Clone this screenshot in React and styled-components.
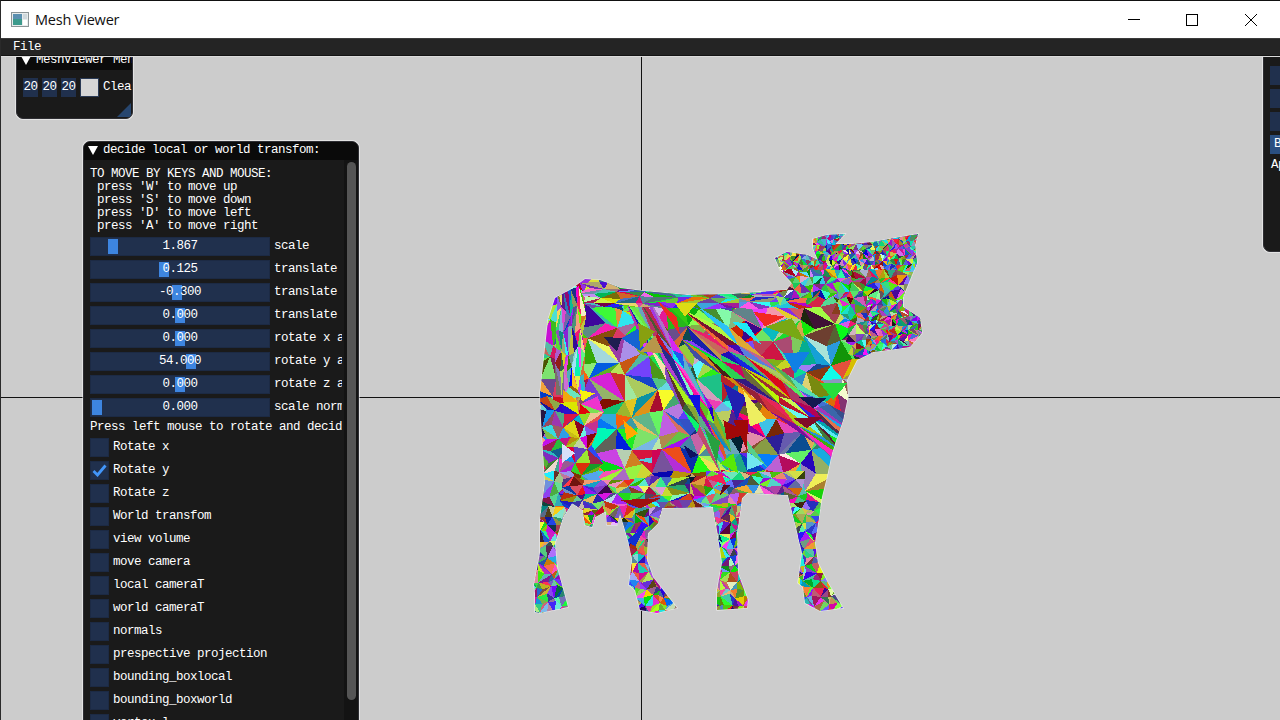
import React from "react";
import styled, { createGlobalStyle } from "styled-components";

const Global = createGlobalStyle`
  html, body { margin: 0; padding: 0; background: #ccc; overflow: hidden; }
`;

const Frame = styled.div`
  width: 1280px; height: 720px; display: flex; flex-direction: column;
  overflow: hidden; box-sizing: border-box;
  border-top: 1px solid #111; border-left: 1px solid #2a2a2a;
`;
const TitleBar = styled.header`
  height: 37px; flex: none; background: #fff; display: flex; align-items: center;
  padding-left: 10px; color: #111;
  font: 14.5px "Open Sans", "Noto Sans", sans-serif;
`;
const AppName = styled.span` margin-left: 6px; flex: 1; letter-spacing: -0.2px; `;
const WinControl = styled.button`
  width: 58.5px; height: 37px; border: 0; background: transparent; padding: 0;
  display: flex; align-items: center; justify-content: center;
`;
const MenuBar = styled.nav`
  height: 18px; flex: none; box-sizing: border-box; background: #242424;
  border-top: 1px solid #3b3b3b; border-bottom: 1px solid #141414;
  padding-left: 12px; display: flex; align-items: center;
  color: #fff; font: 12.5px/13px "Liberation Mono", "DejaVu Sans Mono", monospace; letter-spacing: -0.5px;
`;
const MenuItem = styled.span``;
const Viewport = styled.main`
  position: relative; flex: 1; background: #ccc; overflow: hidden;
  border-top: 1px solid #dcdcdc;
`;
const AxisV = styled.div`position: absolute; left: 640px; top: 0; bottom: 0; width: 1px; background: #111;`;
const AxisH = styled.div`position: absolute; left: 0; right: 0; top: 340px; height: 1px; background: #111;`;
const CowSvg = styled.svg`position: absolute; left: -1px; top: -57px;`;

const Win = styled.section`
  position: absolute; left: ${p => p.$x}px; top: ${p => p.$y}px;
  width: ${p => p.$w}px; height: ${p => p.$h}px;
  box-sizing: border-box; background: #1a1a1a; border: 1px solid #2e2e33;
  border-radius: 7px; box-shadow: 0 0 0 1px rgba(255,255,255,.45);
  overflow: hidden; display: flex; flex-direction: column; color: #fff;
  font: 12.5px/13px "Liberation Mono", "DejaVu Sans Mono", monospace; letter-spacing: -0.5px;
  white-space: nowrap;
`;
const WinTitle = styled.div`
  flex: none; height: 18px; box-sizing: border-box; padding: 0 0 2px 4px;
  background: #0a0a0a; display: flex; align-items: center;
  gap: 5px; overflow: hidden; white-space: nowrap;
`;
const Caret = styled.i`
  flex: none; width: 0; height: 0; border-left: 5px solid transparent; border-right: 5px solid transparent;
  border-top: 9px solid #fff;
`;
const ToolRow = styled.div`
  display: flex; gap: 4px; padding: 8px 0 0 6px; align-items: center;
`;
const NumBox = styled.span`
  width: 15px; height: 19px; flex: none; background: #20304d; text-align: center; line-height: 19px;
`;
const Swatch = styled.span`
  width: 19px; height: 19px; flex: none; box-sizing: border-box; background: #d6d6d6; border: 1px solid #2a3a55;
`;
const Grip = styled.i`
  position: absolute; right: 1px; bottom: 1px; width: 0; height: 0;
  border-left: 14px solid transparent; border-bottom: 14px solid #27466f;
`;
const WinBody = styled.div`flex: 1; display: flex; min-height: 0;`;
const Content = styled.div`
  flex: 1; min-width: 0; overflow: hidden; padding: 8px 2px 0 6px; margin-right: 2px;
  display: flex; flex-direction: column; gap: 4px;
`;
const HelpText = styled.pre`margin: 0; font: inherit; letter-spacing: inherit;`;
const Row = styled.div`display: flex; gap: 4px; height: 19px; flex: none; align-items: center;`;
const Slider = styled.div`
  position: relative; flex: none; width: 180px; height: 19px; box-sizing: border-box;
  background: #20304d; border: 1px solid #1c2a44; text-align: center; line-height: 17px;
`;
const SliderValue = styled.span`position: relative;`;
const SliderGrab = styled.i`
  position: absolute; top: 1px; bottom: 1px; width: 10px; background: #3d85e0;
  left: ${p => p.$at}px;
`;
const Note = styled.div`flex: none; height: 13px;`;
const Check = styled.span`
  width: 19px; height: 19px; flex: none; box-sizing: border-box;
  background: #20304d; border: 1px solid #1c2a44; display: flex; align-items: center; justify-content: center;
`;
const ScrollTrack = styled.div`
  flex: none; width: 14px; background: #131313; padding: 2px 2px 0 3px; box-sizing: border-box;
`;
const ScrollThumb = styled.div`width: 9px; height: 538px; background: #555; border-radius: 5px;`;
const SideRows = styled.div`display: flex; flex-direction: column; gap: 4px; padding: 2px 0 0 6px;`;
const SideLine = styled.div`height: 13px; margin-bottom: 1px; padding-left: 3px;`;
const SideBtn = styled.div`
  height: 19px; width: 60px; background: ${p => p.$active ? "#2a4f80" : "#20304d"};
  line-height: 19px; padding-left: 4px;
`;
const SideNote = styled.div`height: 13px; margin-top: 1px; padding-left: 1px;`;

/* ---------- cow mesh drawing ---------- */
const outline = [
[540,393],[548,320],[555,298],[570,290],[585,279],[600,280],[620,288],[643,291],[687,295],[733,294],[787,290],[792,283],[780,270],[775,258],[787,252],[807,255],[818,260],[813,248],[813,239],[827,235],[845,234],[835,244],[853,244],[873,242],[918,234],[915,245],[917,263],[910,280],[903,297],[903,307],[920,318],[922,333],[910,347],[873,352],[857,360],[847,380],[848,397],[843,420],[832,453],[827,477],[822,497],[815,543],[818,563],[828,583],[843,608],[820,611],[805,603],[803,587],[798,583],[802,553],[795,523],[788,495],[747,493],[742,498],[737,533],[738,573],[748,600],[747,608],[717,610],[717,590],[722,563],[717,530],[713,507],[662,508],[658,523],[648,533],[647,560],[653,577],[677,608],[657,613],[640,610],[635,590],[629,585],[632,560],[628,540],[620,513],[617,525],[607,525],[606,511],[595,517],[592,527],[585,525],[583,510],[572,503],[563,517],[555,543],[557,567],[568,607],[540,613],[535,612],[535,593],[534,585],[540,553],[540,520],[545,483],[541,420]
].map(p => p.join(",")).join(" ");

function rng(seed) {
  let a = seed;
  return () => {
    a |= 0; a = (a + 0x6d2b79f5) | 0;
    let t = Math.imul(a ^ (a >>> 15), 1 | a);
    t = (t + Math.imul(t ^ (t >>> 7), 61 | t)) ^ t;
    return ((t ^ (t >>> 14)) >>> 0) / 4294967296;
  };
}
const rand = rng(20240);
function color() {
  const c = [rand() * 255, rand() * 255, rand() * 255];
  if (rand() > 0.45) {
    const hi = Math.floor(rand() * 3);
    const lo = (hi + 1 + Math.floor(rand() * 2)) % 3;
    c[hi] = 130 + c[hi] * 0.49;
    c[lo] = c[lo] * 0.45;
  }
  return `rgb(${c.map(Math.round).join(",")})`;
}
const str = t => t.map(p => p[0].toFixed(1) + "," + p[1].toFixed(1)).join(" ");
function grid(x0, y0, x1, y1, cw, ch, keep) {
  return sheet(nx => [x0 + nx[0], y0 + nx[1]], x1 - x0, y1 - y0, cw, ch, keep);
}
function sheet(place, w, h, cw, ch, keep) {
  const out = [];
  const nx = Math.ceil(w / cw), ny = Math.ceil(h / ch);
  const pts = [];
  for (let j = 0; j <= ny; j++) {
    pts[j] = [];
    for (let i = 0; i <= nx; i++) {
      pts[j][i] = place([
        i * cw + (j % 2 ? cw / 2 : 0) + (rand() - 0.5) * cw * 0.7,
        j * ch + (rand() - 0.5) * ch * 0.7,
      ]);
    }
  }
  for (let j = 0; j < ny; j++) for (let i = 0; i < nx; i++) {
    const a = pts[j][i], b = pts[j][i + 1], c = pts[j + 1][i], d = pts[j + 1][i + 1];
    if (keep && !keep((a[0] + d[0]) / 2, (a[1] + d[1]) / 2)) continue;
    if ((i + j) % 2) { out.push([str([a, b, c]), color()], [str([b, d, c]), color()]); }
    else { out.push([str([a, b, d]), color()], [str([a, d, c]), color()]); }
  }
  return out;
}
const along = (ox, oy, dx, dy) => ([u, v]) => [ox + u * dx - v * dy, oy + u * dy + v * dx];
const mesh = [
  ...grid(520, 270, 870, 530, 18, 18),
  // long streaks flowing over the flank
  ...sheet(along(697, 305, 0.8, 0.6), 190, 42, 38, 6),
  ...sheet(along(648, 297, 0.5, 0.86), 170, 22, 34, 5),
  ...grid(580, 283, 800, 305, 17, 5),
  // rump stripes
  ...grid(555, 290, 580, 380, 4, 20),
  ...grid(540, 400, 585, 520, 11, 12),
  // belly
  ...grid(560, 470, 800, 515, 11, 8, (x, y) => y > 478 + (x - 560) * 0.02 - (x > 650 ? (x - 650) * 0.12 : 0)),
  // legs
  ...grid(525, 500, 860, 620, 7, 8, (x, y) => y > 510),
  // head
  ...grid(770, 228, 930, 360, 7, 7, (x, y) => x > 778 + (y > 300 ? 50 : 0) + (y > 290 ? (y - 290) * 0.4 : 0)),
  ...grid(850, 300, 925, 355, 5, 5, (x, y) => x > 868),
  ...grid(770, 230, 920, 280, 4, 5, (x, y) => y < 268),
];
const z5 = (x, y) => `${(520 + x / 3).toFixed(1)},${(220 + y / 3).toFixed(1)}`;
const z6 = (x, y) => `${(520 + x / 3).toFixed(1)},${(420 + y / 3).toFixed(1)}`;
const feature = [
  [z5, [700,275,795,290,735,320], "#f22a22"], [z5, [735,320,815,295,855,365], "#78a814"],
  [z5, [790,400,870,395,825,462], "#1080e4"], [z5, [465,250,530,250,495,290], "#dcdc14"],
  [z5, [305,355,355,325,365,395], "#1464d2"], [z5, [355,310,405,335,360,385], "#88a010"],
  [z5, [360,395,405,345,430,400], "#b8964a"], [z5, [635,305,680,310,725,375], "#1eeaf6"],
  [z5, [250,350,305,355,290,395], "#1e1e50"], [z5, [410,240,470,290,480,345], "#ee2a22"],
  [z5, [610,490,680,530,650,600], "#2020b0"], [z5, [670,510,740,600,690,620], "#eeee60"],
  [z5, [610,600,690,640,620,660], "#a00808"], [z5, [835,530,920,535,880,565], "#141850"],
  [z5, [900,490,980,490,940,540], "#28dc3c"], [z5, [820,595,910,590,860,625], "#800a28"],
  [z5, [180,510,225,520,185,545], "#f8f010"], [z5, [130,510,175,545,130,545], "#f0a810"],
  [z5, [505,525,540,525,540,590], "#1010e0"], [z5, [310,600,355,640,320,660], "#ffa800"],
  [z6, [640,0,685,0,680,88], "#a00808"], [z6, [553,25,600,65,590,130], "#28a040"],
  [z6, [600,130,640,100,655,160], "#58e808"], [z6, [680,95,735,130,680,150], "#70e8ee"],
  [z6, [680,60,740,140,685,95], "#58d088"], [z6, [555,175,605,160,620,195], "#f02058"],
  [z6, [125,70,165,100,125,130], "#d8e0f8"], [z6, [610,195,630,195,600,225], "#600820"],
  [z6, [352,120,395,130,395,112], "#58c8e0"], [z6, [490,75,535,105,510,115], "#101060"],
  [z6, [300,240,420,235,360,265], "#a01010"], [z6, [320,360,380,315,345,380], "#1030d0"],
];

function Cow() {
  return (
    <CowSvg width="1280" height="720" viewBox="0 0 1280 720">
      <defs><clipPath id="cowClip"><polygon points={outline} /></clipPath></defs>
      <polygon points={outline} fill="#7ad" stroke="#eee" strokeWidth="1.2" />
      <g clipPath="url(#cowClip)" shapeRendering="crispEdges">
        {mesh.map(([p, c], i) => <polygon key={i} points={p} fill={c} />)}
        {feature.map(([f, c, col], i) => (
          <polygon key={i} fill={col} points={[f(c[0], c[1]), f(c[2], c[3]), f(c[4], c[5])].join(" ")} />
        ))}
      </g>
    </CowSvg>
  );
}

const sliders = [
  ["1.867", 17, "scale"], ["0.125", 68, "translate x"], ["-0.300", 81, "translate y"],
  ["0.000", 84, "translate z"], ["0.000", 84, "rotate x axis"], ["54.000", 95, "rotate y axis"],
  ["0.000", 84, "rotate z axis"], ["0.000", 1, "scale normals"],
];
const checks = ["Rotate x", "Rotate y", "Rotate z", "World transfom", "view volume", "move camera", "local cameraT", "world cameraT", "normals", "prespective projection", "bounding_boxlocal", "bounding_boxworld", "vertex l"];

export default function App() {
  return (
    <Frame>
      <Global />
      <TitleBar>
        <svg width="18" height="15" viewBox="0 0 18 15">
          <rect x="0.5" y="0.5" width="17" height="14" fill="#e8ecec" stroke="#8b9496" />
          <rect x="2" y="2" width="9" height="11" fill="#3c9a8c" />
          <rect x="2" y="2" width="9" height="5" fill="#5a8fb0" />
          <rect x="12" y="2" width="4" height="5" fill="#cfd8dc" />
          <rect x="12" y="8" width="4" height="5" fill="#fff" />
        </svg>
        <AppName>Mesh Viewer</AppName>
        <WinControl aria-label="Minimize">
          <svg width="12" height="12" viewBox="0 0 12 12"><path d="M0 5.5H12" stroke="#000" /></svg>
        </WinControl>
        <WinControl aria-label="Maximize">
          <svg width="12" height="12" viewBox="0 0 12 12"><rect x="0.5" y="0.5" width="11" height="11" fill="none" stroke="#000" /></svg>
        </WinControl>
        <WinControl aria-label="Close">
          <svg width="12" height="12" viewBox="0 0 12 12"><path d="M0 0L12 12M12 0L0 12" stroke="#000" /></svg>
        </WinControl>
      </TitleBar>
      <MenuBar><MenuItem>File</MenuItem></MenuBar>
      <Viewport>
        <AxisV /><AxisH />
        <Cow />

        <Win $x={15} $y={-6} $w={117} $h={68}>
          <WinTitle><Caret />MeshViewer Menu</WinTitle>
          <ToolRow>
            <NumBox>20</NumBox><NumBox>20</NumBox><NumBox>20</NumBox>
            <Swatch />
            <span>Clear</span>
          </ToolRow>
          <Grip />
        </Win>

        <Win $x={82} $y={84} $w={276} $h={660}>
          <WinTitle><Caret />decide local or world transfom:</WinTitle>
          <WinBody>
            <Content>
              <HelpText>{"TO MOVE BY KEYS AND MOUSE:\n press 'W' to move up\n press 'S' to move down\n press 'D' to move left\n press 'A' to move right"}</HelpText>
              {sliders.map(([v, at, l]) => (
                <Row key={l}>
                  <Slider>
                    <SliderGrab $at={at} />
                    <SliderValue>{v}</SliderValue>
                  </Slider>
                  <span>{l}</span>
                </Row>
              ))}
              <Note>Press left mouse to rotate and decide</Note>
              {checks.map((c, i) => (
                <Row key={c}>
                  <Check>
                    {i === 1 && (
                      <svg width="15" height="13" viewBox="0 0 15 13">
                        <path d="M1.5 7L5.5 11L13.5 1.5" fill="none" stroke="#4296fa" strokeWidth="2.8" />
                      </svg>
                    )}
                  </Check>
                  <span>{c}</span>
                </Row>
              ))}
            </Content>
            <ScrollTrack><ScrollThumb /></ScrollTrack>
          </WinBody>
        </Win>

        <Win $x={1262} $y={-30} $w={200} $h={225}>
          <WinTitle />
          <SideRows>
            <SideLine>Hi</SideLine>
            <SideBtn /><SideBtn /><SideBtn />
            <SideBtn $active>B</SideBtn>
            <SideNote>Apply</SideNote>
          </SideRows>
        </Win>
      </Viewport>
    </Frame>
  );
}
